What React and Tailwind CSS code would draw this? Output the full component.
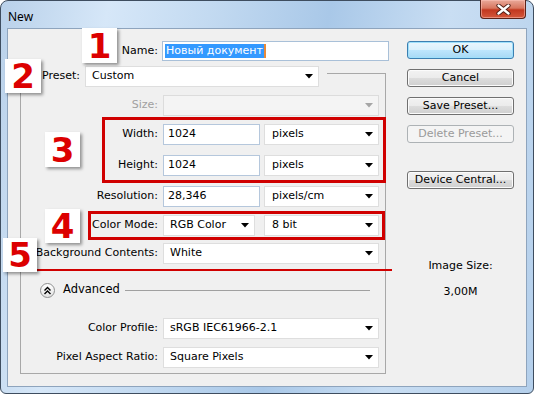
import React from 'react';

const font = { fontFamily: '"DejaVu Sans", sans-serif' };

function Arrow({ disabled }) {
  return (
    <svg width="8" height="5" viewBox="0 0 8 5" className="shrink-0">
      <polygon points="0,0 8,0 4,4.5" fill={disabled ? '#a6a6a6' : '#000'} />
    </svg>
  );
}

function Select({ w, text, disabled, pl = 'pl-[7px]' }) {
  return (
    <div
      className={`h-[21px] shrink-0 border flex items-center justify-between ${pl} pr-[5px] ${
        disabled ? 'bg-[#f4f4f4] border-[#dcdcdc]' : 'bg-white border-[#dedede]'
      }`}
      style={{ width: w }}
    >
      <span className="whitespace-nowrap">{text}</span>
      <Arrow disabled={disabled} />
    </div>
  );
}

function Field({ w, text }) {
  return (
    <div
      className="h-[21px] shrink-0 bg-white border border-[#b5c7dc] flex items-center pl-[4px]"
      style={{ width: w }}
    >
      {text}
    </div>
  );
}

function Row({ label, mt, disabled, children }) {
  return (
    <div className={`flex items-center h-[21px] ${mt}`}>
      <div className={`w-[137px] shrink-0 text-right whitespace-nowrap ${disabled ? 'text-[#a0a0a0]' : ''}`}>
        {label}
      </div>
      <div className="ml-[5px] flex items-center">{children}</div>
    </div>
  );
}

function Button({ children, kind, mt }) {
  const styles = {
    default:
      'border-[#3c7fb1] bg-[linear-gradient(#eaf6fd_0%,#d9f0fc_50%,#bee6fd_50%,#a7d9f5_100%)] shadow-[inset_0_0_0_1px_#9fe0fb]',
    normal:
      'border-[#707070] bg-[linear-gradient(#f2f2f2_0%,#ebebeb_50%,#dddddd_50%,#cfcfcf_100%)] shadow-[inset_0_0_0_1px_#fbfbfb]',
    disabled: 'border-[#adb2b5] bg-[#f4f4f4] text-[#9a9a9a]',
  };
  return (
    <div
      className={`h-[18px] w-[107px] rounded-[3px] border flex items-center justify-center ${styles[kind || 'normal']} ${mt}`}
    >
      {children}
    </div>
  );
}

function Num({ n, className }) {
  return (
    <div
      className={`absolute bg-white shadow-[2px_2px_3px_rgba(0,0,0,0.4)] flex items-center justify-center text-[#dc0000] text-[34px] leading-none font-bold ${className}`}
      style={font}
    >
      {n}
    </div>
  );
}

export default function App() {
  return (
    <div className="relative w-[534px] h-[394px] bg-white overflow-hidden text-[11px] text-black" style={font}>
      <div className="w-[534px] h-[394px] rounded-t-[8px] rounded-b-[6px] border border-[#3e4d5f] bg-[linear-gradient(100deg,#b9d1ea_0%,#d6e7f8_18%,#c3daf1_35%,#a9c8e8_55%,#c9def3_75%,#b4cfeb_100%)] flex flex-col px-[7px] pb-[7px]">
        {/* title bar */}
        <div className="h-[28px] flex items-start justify-between">
          <div className="mt-[7px] text-[12px] text-black" style={{ fontFamily: '"Noto Sans", sans-serif' }}>
            New
          </div>
          <div className="-mt-[1px] w-[46px] h-[19px] rounded-b-[4px] border border-[#5b2319] border-t-0 bg-[linear-gradient(#e9a99a_0%,#d8765f_45%,#c2381f_55%,#d4583c_100%)] shadow-[inset_0_0_0_1px_rgba(255,200,190,0.5)] flex items-center justify-center">
            <svg width="15" height="11" viewBox="0 0 15 11">
              <path d="M2.5 1.5 L12.5 9.5 M12.5 1.5 L2.5 9.5" stroke="#4a1a12" strokeWidth="4.2" strokeLinecap="round" />
              <path d="M2.5 1.5 L12.5 9.5 M12.5 1.5 L2.5 9.5" stroke="#ffffff" strokeWidth="2.4" strokeLinecap="round" />
            </svg>
          </div>
        </div>

        {/* client area */}
        <div className="flex-1 bg-[#f0f0f0] shadow-[0_0_0_1px_#8ea4bd] flex">
          <div className="w-[381px] shrink-0 pl-[12px] pt-[12px]">
            <div className="flex items-center h-[20px]">
              <div className="w-[138px] text-right">Name:</div>
              <div className="ml-[4px] w-[227px] h-[20px] bg-white border border-[#a9c0d8] flex items-center pl-[2px]">
                <span className="bg-[#3399ff] text-white h-[14px] leading-[14px] px-[1px]">Новый документ</span>
                <span className="w-[2px] h-[14px] bg-[#e88a3a]" />
              </div>
            </div>

            <div className="mt-[12px] w-[366px] border border-[#a8a8a8] pb-[5px]">
              <div className="-mt-[8px] ml-[19px] w-fit bg-[#f0f0f0] pl-[2px] pr-[8px] flex items-center h-[21px]">
                <span>Preset:</span>
                <div className="ml-[5px]">
                  <Select w="234px" text="Custom" pl="pl-[6px]" />
                </div>
              </div>
              <Row label="Size:" mt="mt-[8px]" disabled>
                <Select w="216px" text="" disabled />
              </Row>
              <Row label="Width:" mt="mt-[8px]">
                <Field w="97px" text="1024" />
                <div className="ml-[4px]">
                  <Select w="115px" text="pixels" />
                </div>
              </Row>
              <Row label="Height:" mt="mt-[10px]">
                <Field w="97px" text="1024" />
                <div className="ml-[4px]">
                  <Select w="115px" text="pixels" />
                </div>
              </Row>
              <Row label="Resolution:" mt="mt-[10px]">
                <Field w="97px" text="28,346" />
                <div className="ml-[4px]">
                  <Select w="115px" text="pixels/cm" />
                </div>
              </Row>
              <Row label="Color Mode:" mt="mt-[8px]">
                <Select w="92px" text="RGB Color" pl="pl-[6px]" />
                <div className="ml-[9px]">
                  <Select w="115px" text="8 bit" />
                </div>
              </Row>
              <Row label="Background Contents:" mt="mt-[7px]">
                <Select w="216px" text="White" pl="pl-[6px]" />
              </Row>

              <div className="mt-[18px] h-[16px] flex items-center ml-[19px] mr-[15px]">
                <div className="w-[15px] h-[15px] rounded-full border border-[#8e8f8f] bg-[linear-gradient(#ffffff,#e3e3e3)] flex items-center justify-center">
                  <svg width="9" height="9" viewBox="0 0 9 9">
                    <path d="M1.5 4.5 L4.5 1.5 L7.5 4.5 M1.5 8 L4.5 5 L7.5 8" stroke="#000" strokeWidth="1.4" fill="none" />
                  </svg>
                </div>
                <span className="ml-[8px] text-[11.5px]">Advanced</span>
                <div className="flex-1 ml-[5px] h-px bg-[#a0a0a0]" />
              </div>

              <Row label="Color Profile:" mt="mt-[20px]">
                <Select w="216px" text="sRGB IEC61966-2.1" pl="pl-[6px]" />
              </Row>
              <Row label="Pixel Aspect Ratio:" mt="mt-[8px]">
                <Select w="216px" text="Square Pixels" pl="pl-[6px]" />
              </Row>
            </div>
          </div>

          <div className="ml-[18px] pt-[12px] w-[107px] flex flex-col">
            <Button kind="default">OK</Button>
            <Button mt="mt-[10px]">Cancel</Button>
            <Button mt="mt-[10px]">Save Preset...</Button>
            <Button kind="disabled" mt="mt-[10px]">Delete Preset...</Button>
            <Button mt="mt-[28px]">Device Central...</Button>
            <div className="mt-[69px] text-center">Image Size:</div>
            <div className="mt-[9px] text-center">3,00M</div>
          </div>
        </div>
      </div>

      {/* annotations */}
      <div className="absolute left-[102px] top-[117px] w-[284px] h-[66px] border-[3px] border-[#d00000]" />
      <div className="absolute left-[88px] top-[211px] w-[297px] h-[29px] border-[3px] border-[#d00000]" />
      <div className="absolute left-[30px] top-[269px] w-[362px] h-[2px] bg-[#d00000]" />
      <Num n="1" className="left-[82px] top-[28px] w-[35px] h-[35px]" />
      <Num n="2" className="left-[5px] top-[59px] w-[36px] h-[34px]" />
      <Num n="3" className="left-[45px] top-[132px] w-[35px] h-[35px]" />
      <Num n="4" className="left-[45px] top-[209px] w-[35px] h-[34px]" />
      <Num n="5" className="left-[3px] top-[238px] w-[34px] h-[34px]" />
    </div>
  );
}
